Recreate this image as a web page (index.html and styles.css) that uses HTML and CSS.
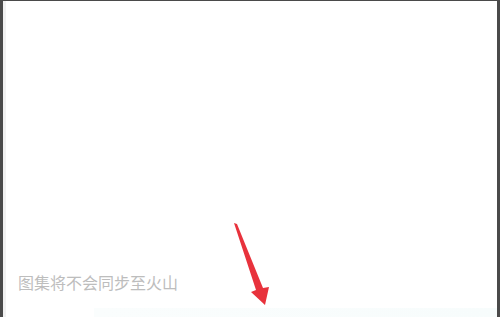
FILE: index.html
```html
<!DOCTYPE html>
<html lang="zh-CN">
<head>
    <meta charset="UTF-8">
    <meta name="viewport" content="width=device-width, initial-scale=1.0">
    <title>图集</title>
    <link rel="stylesheet" href="styles.css">
</head>
<body>

<div class="frame">
    <div class="screen">
        <div class="content"></div>
        <p class="hint">图集将不会同步至火山</p>
        <div class="bottom-bar"></div>

        <!-- annotation arrow -->
        <svg class="arrow" width="60" height="90" viewBox="0 0 60 90">
            <path d="M15 4 L18 5 L44 69 L50 68 L46 86 L32 73 L37 71 Z" fill="#e8323c"/>
        </svg>
    </div>
</div>

</body>
</html>
```

FILE: styles.css
```css
/* Reset */
* {
    margin: 0;
    padding: 0;
    box-sizing: border-box;
}

body {
    width: 500px;
    height: 317px;
    background: #4a4a4a;
    font-family: 'Noto Sans CJK SC', 'Noto Sans', sans-serif;
    overflow: hidden;
}

/* Dark frame around the phone screen */
.frame {
    height: 317px;
    padding: 1px 3px 0 3px;
}

.screen {
    position: relative;
    height: 100%;
    background: #ffffff;
    border-left: 3px solid #f1f1f1;
    display: flex;
    flex-direction: column;
}

.content {
    flex: 1;
}

.hint {
    padding-left: 12px;
    font-size: 16px;
    line-height: 18px;
    color: #bdbdbd;
    margin-bottom: 17px;
}

.bottom-bar {
    height: 9px;
    margin-left: 88px;
    background: linear-gradient(90deg, #fafdfd, #f7fcfc);
}

.arrow {
    position: absolute;
    left: 213px;
    top: 218px;
}
```
